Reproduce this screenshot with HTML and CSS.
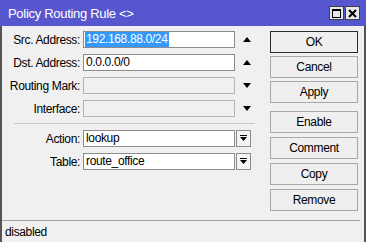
FILE: index.html
```html
<!DOCTYPE html>
<html lang="en">
	<head>
		<meta charset="UTF-8" />
		<title>Policy Routing Rule</title>
		<link rel="stylesheet" href="styles.css">
	</head>
	<body>
		<div class="window">
			<div class="titlebar">
				<span class="title">Policy Routing Rule &lt;&gt;</span>
				<div class="title-buttons">
					<span class="tbtn">
						<svg width="9" height="9" viewBox="0 0 9 9"><rect x="0.5" y="0.5" width="8" height="8" fill="none" stroke="#000" /><line x1="0" y1="1.5" x2="9" y2="1.5" stroke="#000" /></svg>
					</span>
					<span class="tbtn">
						<svg width="9" height="9" viewBox="0 0 9 9"><path d="M1 1 L8 8 M8 1 L1 8" stroke="#000" stroke-width="2" /></svg>
					</span>
				</div>
			</div>

			<div class="body">
				<div class="form">
					<div class="row">
						<label>Src. Address:</label>
						<div class="field"><span class="selected">192.168.88.0/24</span></div>
						<span class="arrow"><svg width="8" height="5" viewBox="0 0 8 5"><path d="M4 0 L8 5 L0 5 Z" fill="#000" /></svg></span>
					</div>
					<div class="row">
						<label>Dst. Address:</label>
						<div class="field">0.0.0.0/0</div>
						<span class="arrow"><svg width="8" height="5" viewBox="0 0 8 5"><path d="M4 0 L8 5 L0 5 Z" fill="#000" /></svg></span>
					</div>
					<div class="row">
						<label>Routing Mark:</label>
						<div class="field disabled"></div>
						<span class="arrow"><svg width="8" height="5" viewBox="0 0 8 5"><path d="M0 0 L8 0 L4 5 Z" fill="#000" /></svg></span>
					</div>
					<div class="row">
						<label>Interface:</label>
						<div class="field disabled"></div>
						<span class="arrow"><svg width="8" height="5" viewBox="0 0 8 5"><path d="M0 0 L8 0 L4 5 Z" fill="#000" /></svg></span>
					</div>
					<div class="separator"></div>
					<div class="row">
						<label>Action:</label>
						<div class="field">lookup</div>
						<span class="dropdown"><svg width="7" height="7" viewBox="0 0 7 7"><rect x="0" y="0" width="7" height="1" fill="#000" /><path d="M0 2 L7 2 L3.5 6 Z" fill="#000" /></svg></span>
					</div>
					<div class="row">
						<label>Table:</label>
						<div class="field">route_office</div>
						<span class="dropdown"><svg width="7" height="7" viewBox="0 0 7 7"><rect x="0" y="0" width="7" height="1" fill="#000" /><path d="M0 2 L7 2 L3.5 6 Z" fill="#000" /></svg></span>
					</div>
				</div>

				<div class="buttons">
					<div class="button-group">
						<button class="default">OK</button>
						<button>Cancel</button>
						<button>Apply</button>
					</div>
					<div class="button-group wide">
						<button>Enable</button>
						<button>Comment</button>
						<button>Copy</button>
						<button>Remove</button>
					</div>
				</div>
			</div>

			<div class="status">disabled</div>
		</div>
	</body>
</html>
```

FILE: styles.css
```css
body {
	margin: 0;
	font-family: "Liberation Sans", Arial, sans-serif;
	font-size: 12px;
	letter-spacing: -0.35px;
	color: #000;
	background-color: #f0f0f0;
}
.window {
	width: 366px;
	height: 242px;
	box-sizing: border-box;
	border-left: 2px solid #555;
	border-right: 2px solid #555;
	background-color: #f0f0f0;
	display: flex;
	flex-direction: column;
}
.titlebar {
	height: 26px;
	background-color: #5656cf;
	display: flex;
	align-items: center;
	justify-content: space-between;
	padding: 0 6px 0 8px;
	margin: 0 -2px;
}
.title {
	color: #fff;
	font-size: 13px;
	letter-spacing: -0.3px;
}
.title-buttons {
	display: flex;
	gap: 1px;
}
.tbtn {
	width: 13px;
	height: 12px;
	background-color: #e8e8e8;
	border: 1px solid #404040;
	display: flex;
	align-items: center;
	justify-content: center;
}
.body {
	flex: 1;
	display: flex;
	padding-top: 5px;
}
.form {
	width: 266px;
	display: flex;
	flex-direction: column;
	gap: 6px;
}
.row {
	display: flex;
	align-items: center;
	height: 17px;
}
.row label {
	width: 78px;
	text-align: right;
	margin-right: 3px;
	white-space: nowrap;
}
.field {
	width: 152px;
	height: 17px;
	box-sizing: border-box;
	border: 1px solid #8c8c8c;
	background-color: #fff;
	padding: 0 2px;
	line-height: 15px;
	white-space: nowrap;
}
.field.disabled {
	background-color: #f0f0f0;
	border-color: #b4b4b4;
}
.selected {
	background-color: #3399ff;
	color: #fff;
	display: inline-block;
	padding: 0 1px;
	margin-left: -1px;
}
.arrow {
	width: 18px;
	display: flex;
	justify-content: center;
	margin-left: 3px;
}
.dropdown {
	width: 15px;
	height: 17px;
	box-sizing: border-box;
	border: 1px solid #8c8c8c;
	background-color: #f4f4f4;
	margin-left: 1px;
	display: flex;
	align-items: center;
	justify-content: center;
}
.separator {
	height: 1px;
	background-color: #c8c8c8;
	margin: 0 13px 0 12px;
}
.buttons {
	margin-left: 2px;
	display: flex;
	flex-direction: column;
	gap: 8px;
}
.button-group {
	display: flex;
	flex-direction: column;
	gap: 3px;
}
.button-group.wide {
	gap: 4px;
}
button {
	width: 88px;
	height: 22px;
	font-family: inherit;
	font-size: 12px;
	letter-spacing: -0.35px;
	color: #000;
	background-color: #efefef;
	border: 1px solid #a8a8a8;
	padding: 0;
}
button.default {
	border-color: #2a2a2a;
}
.status {
	height: 22px;
	box-sizing: border-box;
	border-top: 1px solid #a0a0a0;
	padding: 4px 3px;
	margin-right: 4px;
}
```
